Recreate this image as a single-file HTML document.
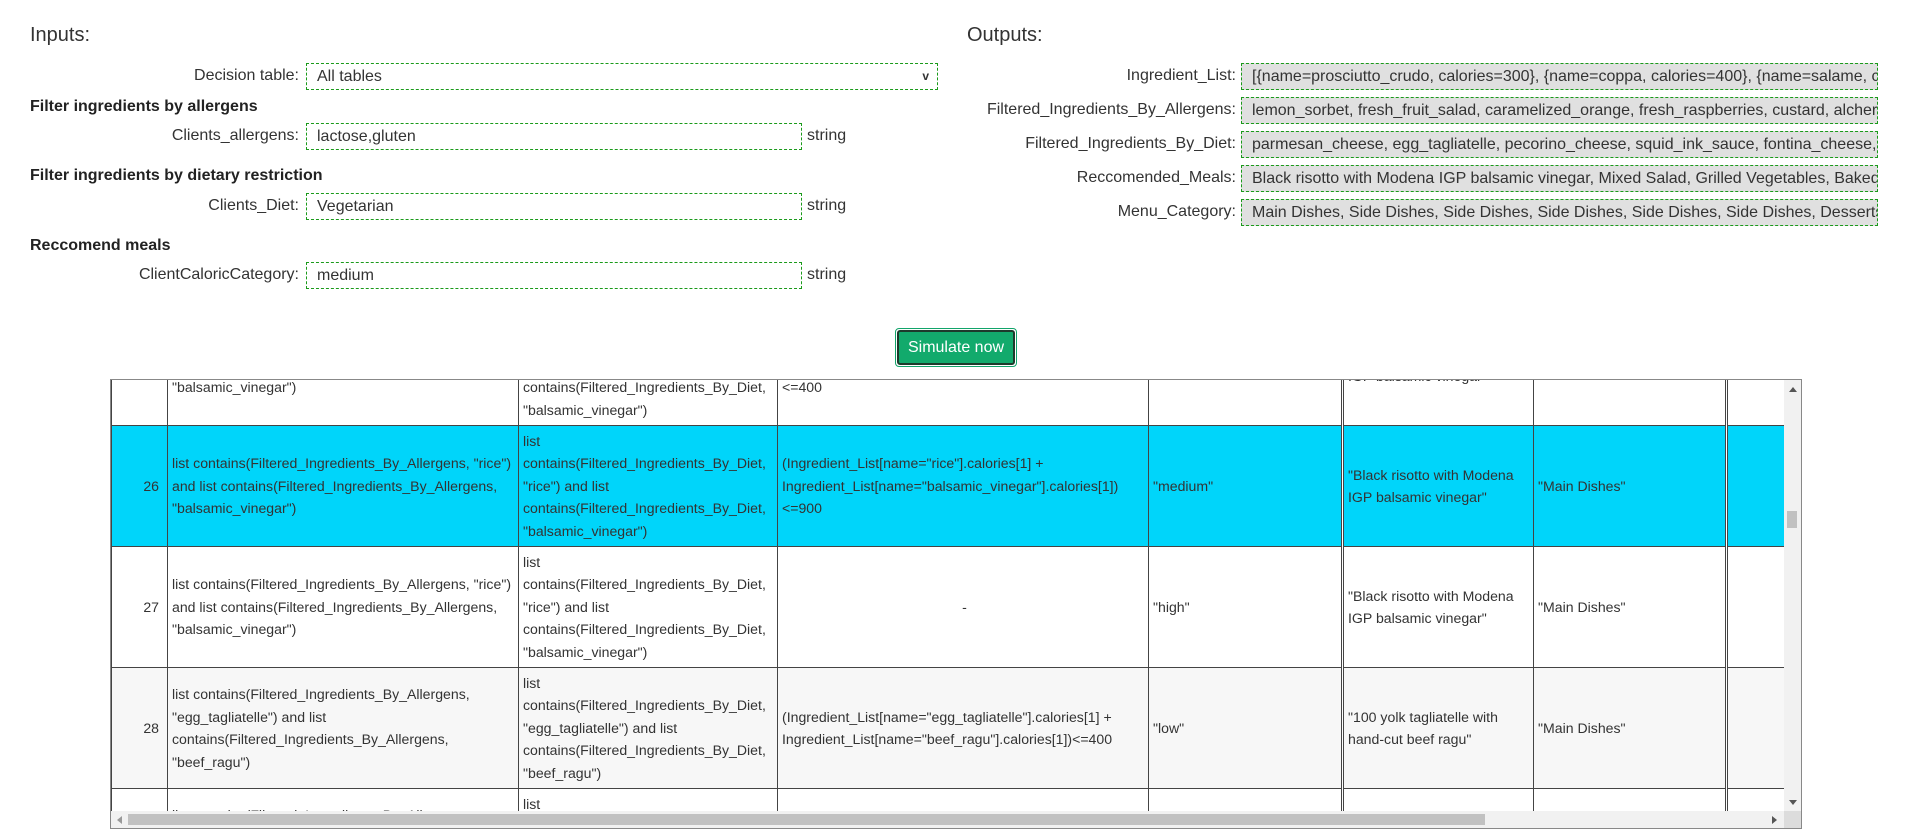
<!DOCTYPE html>
<html><head><meta charset="utf-8"><style>
*{box-sizing:border-box;margin:0;padding:0}
html,body{width:1905px;height:835px;overflow:hidden}
body{background:#fff;font-family:"Liberation Sans",Arial,sans-serif;color:#333;position:relative}
.a{position:absolute;white-space:nowrap}
.h{font-size:20px;color:#333}
.lbl{font-size:16px;text-align:right;color:#333}
.b{font-size:16px;font-weight:bold;color:#222}
.in{position:absolute;height:27px;border:1px dashed #1a9a1a;font-size:16px;line-height:25px;padding-left:10px;color:#333;white-space:nowrap;overflow:hidden}
.out{background:#e0e0e0}
.btn{position:absolute;left:895px;top:328px;width:122px;height:39px;border:1px solid #12a46a;border-radius:4px;padding:1px}
.btn div{width:100%;height:100%;background:#12aa6c;border:2px solid #1d3a2c;border-radius:3px;color:#fff;font-size:16px;text-align:center;line-height:31px}
.wrap{position:absolute;left:110px;top:379px;width:1692px;height:450px;border:1px solid #888;overflow:hidden}
table{position:absolute;left:0;top:-76px;width:1735px;border-collapse:collapse;table-layout:fixed;font-size:14.1px;color:#333}
td{height:121px;border:1px solid #444;vertical-align:middle;padding:0 1px 0 4px;line-height:22.5px;overflow:hidden}
td.n{text-align:right;padding-right:8px}
td.d{border-right:3px double #444}
tr.s td{background:#00d5fa}
tr.g td{background:#f7f7f7}
.vs{position:absolute;right:0;top:0;width:17px;height:432px;background:#f1f1f1}
.hs{position:absolute;left:0;bottom:0;width:1690px;height:17px;background:#f1f1f1}
</style></head><body>
<div class="a h" style="left:30px;top:24px">Inputs:</div>
<div class="a lbl" style="right:1606px;top:67px">Decision table:</div>
<div class="in" style="left:306px;top:63px;width:632px">All tables<span style="position:absolute;right:8px;top:0;font-size:12px;font-weight:bold">v</span></div>
<div class="a b" style="left:30px;top:98px">Filter ingredients by allergens</div>
<div class="a lbl" style="right:1606px;top:127px">Clients_allergens:</div>
<div class="in" style="left:306px;top:123px;width:496px">lactose,gluten</div>
<div class="a lbl" style="left:807px;top:127px">string</div>
<div class="a b" style="left:30px;top:167px">Filter ingredients by dietary restriction</div>
<div class="a lbl" style="right:1606px;top:197px">Clients_Diet:</div>
<div class="in" style="left:306px;top:193px;width:496px">Vegetarian</div>
<div class="a lbl" style="left:807px;top:197px">string</div>
<div class="a b" style="left:30px;top:237px">Reccomend meals</div>
<div class="a lbl" style="right:1606px;top:266px">ClientCaloricCategory:</div>
<div class="in" style="left:306px;top:262px;width:496px">medium</div>
<div class="a lbl" style="left:807px;top:266px">string</div>

<div class="a h" style="left:967px;top:24px">Outputs:</div>
<div class="a lbl" style="right:669px;top:67px">Ingredient_List:</div>
<div class="in out" style="left:1241px;top:63px;width:637px">[{name=prosciutto_crudo, calories=300}, {name=coppa, calories=400}, {name=salame, calories=350}]</div>
<div class="a lbl" style="right:669px;top:101px">Filtered_Ingredients_By_Allergens:</div>
<div class="in out" style="left:1241px;top:97px;width:637px">lemon_sorbet, fresh_fruit_salad, caramelized_orange, fresh_raspberries, custard, alchermes</div>
<div class="a lbl" style="right:669px;top:135px">Filtered_Ingredients_By_Diet:</div>
<div class="in out" style="left:1241px;top:131px;width:637px">parmesan_cheese, egg_tagliatelle, pecorino_cheese, squid_ink_sauce, fontina_cheese, rice</div>
<div class="a lbl" style="right:669px;top:169px">Reccomended_Meals:</div>
<div class="in out" style="left:1241px;top:165px;width:637px">Black risotto with Modena IGP balsamic vinegar, Mixed Salad, Grilled Vegetables, Baked Potatoes</div>
<div class="a lbl" style="right:669px;top:203px">Menu_Category:</div>
<div class="in out" style="left:1241px;top:199px;width:637px">Main Dishes, Side Dishes, Side Dishes, Side Dishes, Side Dishes, Side Dishes, Desserts</div>

<div class="btn"><div>Simulate now</div></div>

<div class="wrap">
<table>
<colgroup><col style="width:56px"><col style="width:351px"><col style="width:259px"><col style="width:371px"><col style="width:194px"><col style="width:191px"><col style="width:193px"><col style="width:120px"></colgroup>
<tr><td class="n">25</td><td>list contains(Filtered_Ingredients_By_Allergens, "rice") and list contains(Filtered_Ingredients_By_Allergens, "balsamic_vinegar")</td><td>list contains(Filtered_Ingredients_By_Diet, "rice") and list contains(Filtered_Ingredients_By_Diet, "balsamic_vinegar")</td><td>(Ingredient_List[name="rice"].calories[1] + Ingredient_List[name="balsamic_vinegar"].calories[1]) &lt;=400</td><td class="d">"low"</td><td>"Black risotto with Modena IGP balsamic vinegar"</td><td class="d">"Main Dishes"</td><td></td></tr>
<tr class="s"><td class="n">26</td><td>list contains(Filtered_Ingredients_By_Allergens, "rice") and list contains(Filtered_Ingredients_By_Allergens, "balsamic_vinegar")</td><td>list contains(Filtered_Ingredients_By_Diet, "rice") and list contains(Filtered_Ingredients_By_Diet, "balsamic_vinegar")</td><td>(Ingredient_List[name="rice"].calories[1] + Ingredient_List[name="balsamic_vinegar"].calories[1]) &lt;=900</td><td class="d">"medium"</td><td>"Black risotto with Modena IGP balsamic vinegar"</td><td class="d">"Main Dishes"</td><td></td></tr>
<tr><td class="n">27</td><td>list contains(Filtered_Ingredients_By_Allergens, "rice") and list contains(Filtered_Ingredients_By_Allergens, "balsamic_vinegar")</td><td>list contains(Filtered_Ingredients_By_Diet, "rice") and list contains(Filtered_Ingredients_By_Diet, "balsamic_vinegar")</td><td style="text-align:center">-</td><td class="d">"high"</td><td>"Black risotto with Modena IGP balsamic vinegar"</td><td class="d">"Main Dishes"</td><td></td></tr>
<tr class="g"><td class="n">28</td><td>list contains(Filtered_Ingredients_By_Allergens, "egg_tagliatelle") and list contains(Filtered_Ingredients_By_Allergens, "beef_ragu")</td><td>list contains(Filtered_Ingredients_By_Diet, "egg_tagliatelle") and list contains(Filtered_Ingredients_By_Diet, "beef_ragu")</td><td>(Ingredient_List[name="egg_tagliatelle"].calories[1] + Ingredient_List[name="beef_ragu"].calories[1])&lt;=400</td><td class="d">"low"</td><td>"100 yolk tagliatelle with hand-cut beef ragu"</td><td class="d">"Main Dishes"</td><td></td></tr>
<tr><td class="n">29</td><td>list contains(Filtered_Ingredients_By_Allergens, "egg_tagliatelle") and list contains(Filtered_Ingredients_By_Allergens, "beef_ragu")</td><td>list contains(Filtered_Ingredients_By_Diet, "egg_tagliatelle") and list contains(Filtered_Ingredients_By_Diet, "beef_ragu")</td><td>-</td><td class="d">"medium"</td><td>"100 yolk tagliatelle with hand-cut beef ragu"</td><td class="d">"Main Dishes"</td><td></td></tr>
</table>
<div class="vs">
<div style="position:absolute;left:5px;top:7px;width:0;height:0;border-left:4px solid transparent;border-right:4px solid transparent;border-bottom:5px solid #555"></div>
<div style="position:absolute;left:3px;top:131px;width:10px;height:17px;background:#c1c1c1"></div>
<div style="position:absolute;left:5px;bottom:7px;width:0;height:0;border-left:4px solid transparent;border-right:4px solid transparent;border-top:5px solid #555"></div>
</div>
<div class="hs">
<div style="position:absolute;left:6px;top:5px;width:0;height:0;border-top:4px solid transparent;border-bottom:4px solid transparent;border-right:5px solid #999"></div>
<div style="position:absolute;left:17px;top:3px;width:1357px;height:11px;background:#c1c1c1"></div>
<div style="position:absolute;right:24px;top:5px;width:0;height:0;border-top:4px solid transparent;border-bottom:4px solid transparent;border-left:5px solid #555"></div>
</div>
<div style="position:absolute;right:0;bottom:0;width:17px;height:17px;background:#dcdcdc"></div>
</div>
</body></html>
